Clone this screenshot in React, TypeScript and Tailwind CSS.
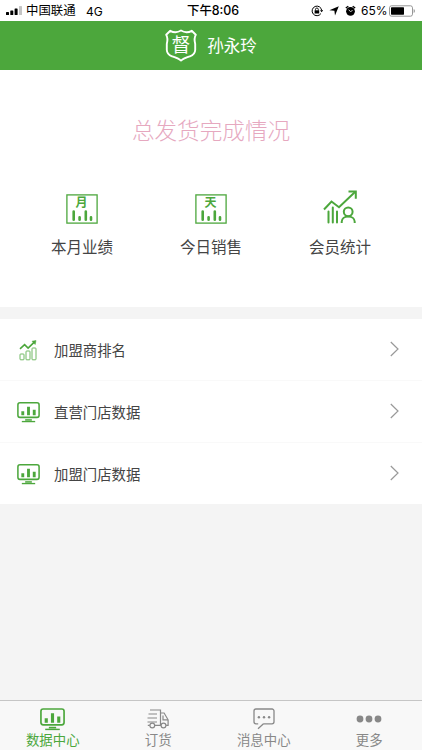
import React, { FC, ReactNode } from 'react';

type IconProps = {
    className?: string
}

type StatProps = {
    icon: ReactNode,
    title: string
}

type RowProps = {
    icon: ReactNode,
    title: string
}

type TabProps = {
    icon: ReactNode,
    title: string,
    active?: boolean
}

const MonitorIcon: FC<IconProps> = ({ className }) => (
    <svg viewBox="0 0 24 22" className={className} fill="none" stroke="currentColor">
        <rect x="0.9" y="0.9" width="22.2" height="15.2" rx="2.2" strokeWidth="1.6" />
        <path d="M6 14V9.8M12 14V5M18 14V8" strokeWidth="3" />
        <path d="M8.5 18.8h7" strokeWidth="1.6" />
        <path d="M5 20.5h14" strokeWidth="1.4" />
    </svg>
);

const PeriodIcon: FC<{ label: string }> = ({ label }) => (
    <svg viewBox="0 0 32 30" className="h-[30px] w-8" fill="none" stroke="currentColor">
        <rect x="0.9" y="0.9" width="30.2" height="28.2" strokeWidth="1.3" />
        <text x="15.5" y="13.1" textAnchor="middle" fontSize="12" fontWeight="700" fill="currentColor" stroke="none">{label}</text>
        <path d="M7.7 17.5v8.3M19.8 17.5v8.3M13.6 23.2v2.6M25 23.2v2.6" strokeWidth="2.6" strokeLinecap="round" />
    </svg>
);

const MemberIcon = () => (
    <svg viewBox="0 0 34 34" className="h-[34px] w-[34px]" fill="none" stroke="currentColor">
        <path d="M1 19.5l7.5-8 7.500 5.700L32 2" strokeWidth="2" />
        <path d="M25.5 1.4h7.3v7.4" strokeWidth="2" />
        <path d="M5.5 21.5v11M9.8 17.5v15M14 21.5v11" strokeWidth="2" strokeLinecap="round" />
        <circle cx="25.2" cy="21.8" r="4.4" strokeWidth="2" />
        <path d="M18.700 33v-1.200c0-3.200 2.800-5.300 6.500-5.300s6.500 2.100 6.500 5.300V33" strokeWidth="2" />
    </svg>
);

const RankIcon = () => (
    <svg viewBox="0 0 18 21" className="h-[21px] w-[18px]" fill="none" stroke="currentColor">
        <path d="M1 8.800l4.600-4.100 3.500 3.400 6.700-6.400" strokeWidth="1.6" />
        <path d="M13 1.2l4-.7-.8 4z" fill="currentColor" strokeWidth="0.5" />
        <g strokeWidth="0.8">
            <rect x="1" y="14" width="4" height="5.8" rx="0.7" />
            <rect x="7" y="11" width="4" height="8.8" rx="0.7" />
            <rect x="13" y="8" width="4" height="11.8" rx="0.7" />
        </g>
    </svg>
);

const TruckIcon = () => (
    <svg viewBox="0 0 22 20" className="h-5 w-[22px]" fill="none" stroke="currentColor" strokeWidth="1.2">
        <path d="M3 1h10.5v15.3M1.5 5h8.5M.5 9h9.5M.5 13h9.5M13.5 4h3.6l4 6.8v5.5h-2M.8 16.3h1.9M8 16.3h6" />
        <path d="M16 6.5v4.3h5" />
        <circle cx="5.3" cy="16.5" r="2.4" />
        <circle cx="16.5" cy="16.5" r="2.4" />
    </svg>
);

const MessageIcon = () => (
    <svg viewBox="0 0 22 22" className="h-[22px] w-[22px]" fill="none" stroke="currentColor">
        <path d="M10.5 15.8H19a2 2 0 0 0 2-2V3a2 2 0 0 0-2-2H3a2 2 0 0 0-2 2v10.8a2 2 0 0 0 2 2h2.2M10.5 15.8L5 20.8" strokeWidth="1.3" />
        <g fill="currentColor" stroke="none">
            <circle cx="5.9" cy="9.2" r="1.2" />
            <circle cx="11" cy="9.2" r="1.2" />
            <circle cx="16.1" cy="9.2" r="1.2" />
        </g>
    </svg>
);

const MoreIcon = () => (
    <svg viewBox="0 0 26 8" className="h-2 w-[26px]" fill="currentColor">
        <circle cx="4" cy="4" r="3.4" />
        <circle cx="13" cy="4" r="3.4" />
        <circle cx="22" cy="4" r="3.4" />
    </svg>
);

const ShieldIcon = () => (
    <svg viewBox="0 0 32 33" className="h-[33px] w-8" fill="none" stroke="currentColor">
        <path d="M16 1.5C12.5 3.6 9 3.8 5.3 1.8L1.2 5.8C3 9 2.6 12 1.8 15V21C2 25 4 26.3 7 27.3C10.5 28.4 13.5 29.300 16 31.600C18.500 29.300 21.500 28.400 25 27.300C28 26.300 30 25 30.200 21V15C29.400 12 29 9 30.800 5.800L26.700 1.800C23 3.800 19.500 3.600 16 1.500Z" strokeWidth="1.9" strokeLinejoin="round" />
        <text x="16" y="22.5" textAnchor="middle" fontSize="19" fill="currentColor" stroke="none">督</text>
    </svg>
);

const StatusBar = () => (
    <div className="flex h-[21px] items-center bg-white pl-[6px] pr-[4px] font-['Inter','Noto_Sans_CJK_SC',sans-serif] text-[12px] text-black">
        <svg viewBox="0 0 17 10" className="h-[10px] w-[17px] shrink-0" fill="currentColor">
            <rect x="0" y="6" width="3" height="3" rx="0.6" />
            <rect x="4.3" y="4.5" width="3" height="4.5" rx="0.6" />
            <rect x="8.6" y="2.5" width="3" height="6.5" rx="0.6" />
            <rect x="13" y="0" width="3" height="9" rx="0.6" fill="#c4c4c4" />
        </svg>
        <span className="ml-[3px] w-[60px] shrink-0 pt-[2px] text-[12.4px]">中国联通</span>
        <span className="w-[101px] shrink-0 pt-[2px] text-[12px]">4G</span>
        <span className="w-[124px] shrink-0 pt-[2px] text-[12.4px] font-medium">下午8:06</span>
        <svg viewBox="0 0 12 12" className="h-3 w-3 shrink-0" fill="none" stroke="currentColor">
            <path d="M9.9 8.6A4.8 4.8 0 1 1 10.7 5.5" strokeWidth="1" />
            <path d="M9 5.2h3.2l-1.6 2z" fill="currentColor" stroke="none" />
            <rect x="3.6" y="5.3" width="4.6" height="3.2" fill="currentColor" stroke="none" />
            <path d="M4.5 5.5V4.4a1.4 1.4 0 0 1 2.8 0v1.1" strokeWidth="0.9" />
        </svg>
        <svg viewBox="0 0 10 10" className="ml-[6px] h-[10px] w-[10px] shrink-0" fill="currentColor">
            <path d="M9.8.2L6 9.6 5.4 4.8.4 4.3z" />
        </svg>
        <svg viewBox="0 0 11 12" className="ml-[6px] h-3 w-[11px] shrink-0" fill="currentColor">
            <circle cx="5.5" cy="6.3" r="4.4" />
            <path d="M.8 3L3.3 1.2M10.2 3L7.7 1.2" stroke="currentColor" strokeWidth="1.4" />
            <path d="M3.6 4.8l1.900 1.700L7.600 5.500" fill="none" stroke="#fff" strokeWidth="0.8" />
        </svg>
        <span className="ml-[5px] w-[28px] shrink-0 pt-px text-[12px]">65%</span>
        <svg viewBox="0 0 27 12" className="h-3 w-[27px] shrink-0">
            <rect x="0.5" y="0.8" width="23" height="10.4" rx="2" fill="none" stroke="#8b8b8b" strokeWidth="0.9" />
            <rect x="2" y="2.3" width="13" height="7.4" rx="0.6" fill="#000" />
            <path d="M24.7 4v4c1.5-.6 1.5-3.4 0-4z" fill="#8b8b8b" />
        </svg>
    </div>
);

const Stat: FC<StatProps> = ({ icon, title }) => (
    <div className="flex w-[129px] flex-col items-center">
        <div className="flex h-9 items-end text-[#4ca73c]">{icon}</div>
        <span className="mt-3 text-[15.5px] leading-6 text-[#444]">{title}</span>
    </div>
);

const Row: FC<RowProps> = ({ icon, title }) => (
    <div className="flex h-[62px] items-center border-b border-[#f9f9f9] bg-white pl-[16px] pr-[23px] last:h-[61px] last:border-b-0">
        <div className="flex w-6 justify-center pt-[2px] text-[#4ca73c]">{icon}</div>
        <span className="ml-[14px] flex-1 pt-[5px] text-[14.4px] text-[#444]">{title}</span>
        <svg viewBox="0 0 9 16" className="mb-[1px] h-4 w-[9px]" fill="none" stroke="#999">
            <path d="M.8 1l7.2 7-7.2 7" strokeWidth="1.2" />
        </svg>
    </div>
);

const Tab: FC<TabProps> = ({ icon, title, active }) => (
    <div className={`flex flex-1 flex-col items-center pt-[6px] ${active ? "text-[#4ca73c]" : "text-[#888]"}`}>
        <div className="flex h-6 items-center">{icon}</div>
        <span className="mt-[1px] text-[13.4px] leading-[18px]">{title}</span>
    </div>
);

const App = () => {
    return (
        <div className="flex h-[750px] w-[422px] flex-col overflow-hidden bg-[#f4f4f4] font-['Liberation_Sans','Noto_Sans_CJK_SC',sans-serif]">
            <StatusBar />
            <header className="flex h-[49px] items-center justify-center bg-[#4ca73c] text-white">
                <ShieldIcon />
                <h1 className="ml-[10px] pt-[2px] text-[16.5px]">孙永玲</h1>
            </header>
            <section className="h-[237px] bg-white">
                <h2 className="pt-[45px] text-center text-[22.6px] font-light leading-[34px] text-[#e6a8bf]">总发货完成情况</h2>
                <div className="mt-[39px] flex justify-center">
                    <Stat icon={<PeriodIcon label="月" />} title="本月业绩" />
                    <Stat icon={<PeriodIcon label="天" />} title="今日销售" />
                    <Stat icon={<MemberIcon />} title="会员统计" />
                </div>
            </section>
            <section className="mt-3">
                <Row icon={<RankIcon />} title="加盟商排名" />
                <Row icon={<MonitorIcon className="h-[21px] w-[23px]" />} title="直营门店数据" />
                <Row icon={<MonitorIcon className="h-[21px] w-[23px]" />} title="加盟门店数据" />
            </section>
            <nav className="mt-auto flex h-[50px] border-t border-[#c6c6c6] bg-[#f8f8f8]">
                <Tab icon={<MonitorIcon className="h-[23px] w-[25px]" />} title="数据中心" active />
                <Tab icon={<TruckIcon />} title="订货" />
                <Tab icon={<MessageIcon />} title="消息中心" />
                <Tab icon={<MoreIcon />} title="更多" />
            </nav>
        </div>
    );
};

export default App;
